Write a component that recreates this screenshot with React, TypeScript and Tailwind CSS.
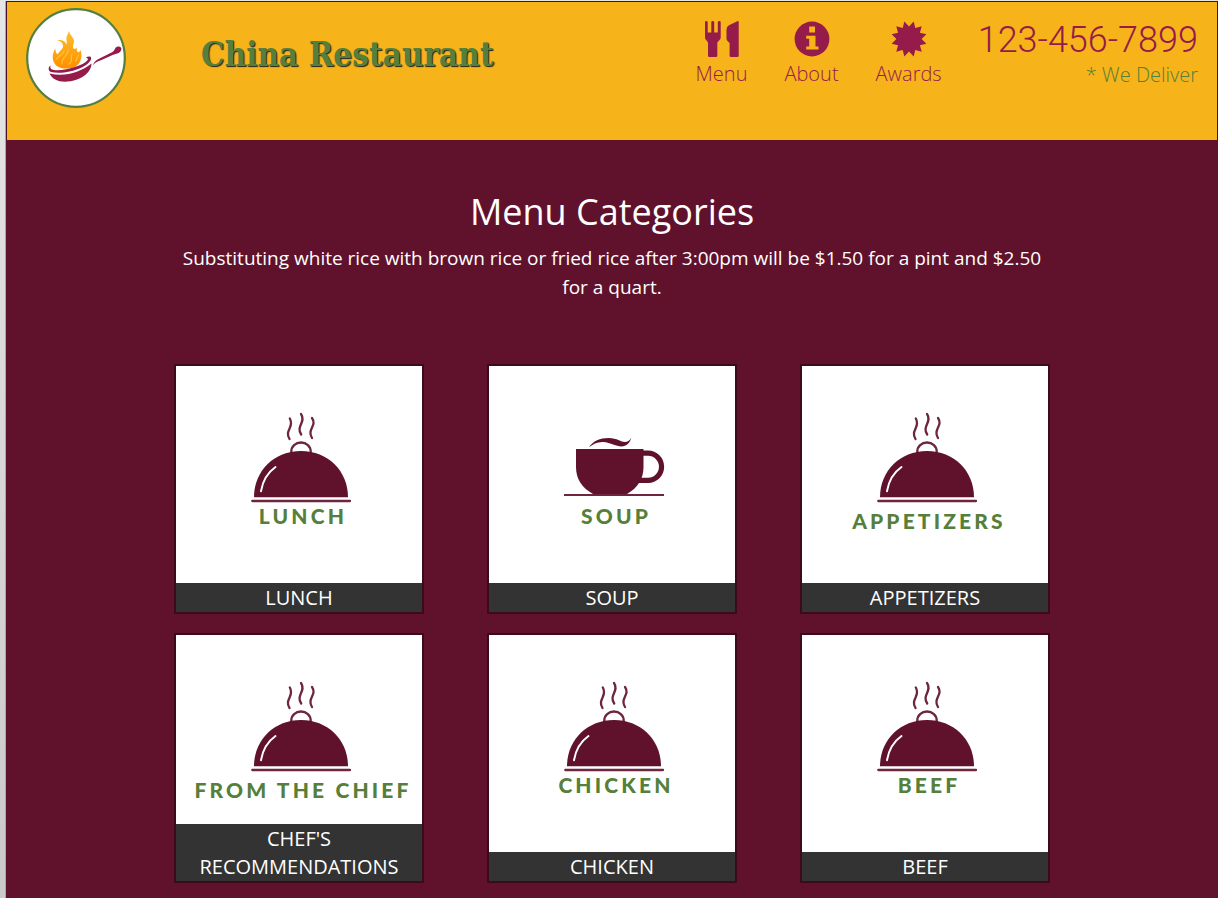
import React from "react";

function Logo() {
  return (
    <svg viewBox="0 0 100 100" className="size-[100px] shrink-0" role="img" aria-label="Flaming pan">
      <defs>
        <linearGradient id="flame" x1="0" y1="0" x2="0" y2="1">
          <stop offset="0" stopColor="#fbc02d" />
          <stop offset="1" stopColor="#ff8f00" />
        </linearGradient>
      </defs>
      <circle cx="50" cy="50" r="48.8" fill="#fff" stroke="#557f42" strokeWidth="2.2" />
      <path
        fill="url(#flame)"
        d="M42.5 22.7C44.5 27 47.5 29.500 48 33C48.300 35.500 46.500 37 47 39.500C47.500 41.500 50 41.500 50.500 39C51 41 50.500 42.500 51.500 44C53 44.500 54 43.500 54.500 42C56.500 47 55.500 53 51.500 57C48.500 60 44.500 60.700 40 60.500C34.500 60.500 30 58.500 28 54.500C25.800 50 26.800 44.500 29.300 40.500C29.500 44 30.300 46 32 46.300C33 42.500 37.500 41.500 37 37.500C36.500 34.500 34.500 33 31.200 32.300C35.500 31.300 39.500 33 40.300 36.500C41.500 34 40 31.500 40.500 29C41 26.500 43 25.500 42.500 22.700Z"
      />
      <path
        fill="none"
        stroke="#ffc22e"
        strokeWidth="1.2"
        strokeLinecap="round"
        d="M30.500 51C32 48 36.500 47.500 38 43M36 56C34.500 51 41.500 48 42.500 42M43 56C47 54 44.500 49 46 46M49.500 53C51.500 51 51 49 52.500 47"
      />
      <path
        fill="#951b4a"
        d="M24.500 57.500C22 59 22 63 25 64C35 66.500 51 63 60 57C64 54 66.500 50.500 64.500 48.700C63.500 48.200 61.500 48.500 59.800 49.400C62 50 62.500 51 61.300 52.500C57 57.500 39 63.300 28 62C25 61.500 23.800 60.500 24.500 57.500ZM23.500 65.500C39 69 54 64.500 65.500 55.500C65.500 64.500 54 73.700 39 73.700C31.500 73.700 26 70.700 23.500 65.500Z"
      />
      <path
        fill="#951b4a"
        d="M66.700 58C67.500 54.500 69.500 52.500 72.500 51L86.500 43.900C89 42.500 88.500 40 91 38.800C93.800 37.800 96 39.500 95.300 42C94.500 44.500 92 45.500 89.500 46C86.500 46.700 78.500 50.800 73.500 52.800C70 54.300 68.500 55 66.700 58Z"
      />
    </svg>
  );
}

function CutleryIcon() {
  return (
    <svg viewBox="0 0 34 36" className="h-9 w-[34px]" fill="currentColor" aria-hidden="true">
      <path d="M0 1.300Q0 0 1.300 0T2.700 1.300V11.500H6.300V1.300Q6.300 0 7.700 0T9.200 1.300V11.500H12.800V1.300Q12.800 0 14.200 0T15.700 1.300V16.500Q15.700 18 14.500 19L12.300 21.500V34.700Q12.300 36 11 36H4.300Q3 36 3 34.700V21.500L1.200 19Q0 18 0 16.500Z" />
      <path d="M21.500 8.500Q21.500 5.500 24 4.200L32.300 .2Q33.700 -.2 33.700 1V34.700Q33.700 36 32.400 36H26Q24.600 36 24.600 34.700V22L22.300 19.800Q21.500 19 21.500 17.500Z" />
    </svg>
  );
}

function InfoIcon() {
  return (
    <svg viewBox="0 0 36 36" className="size-9" aria-hidden="true">
      <circle cx="18" cy="18" r="17.400" fill="currentColor" />
      <path
        fill="#f6b31a"
        d="M15.200 5.500H21V11.500H15.200ZM12.200 14.700H21.500V25.500H24.500V28.500H12.200V25.500H15.200V17.700H12.200Z"
      />
    </svg>
  );
}

function BurstIcon() {
  const points = Array.from({ length: 24 }, (_, i) => {
    const radius = i % 2 === 0 ? 18 : 12.6;
    const angle = ((i * 15 - 75) * Math.PI) / 180;
    return `${(18 + radius * Math.cos(angle)).toFixed(2)},${(18 + radius * Math.sin(angle)).toFixed(2)}`;
  }).join(" ");
  return (
    <svg viewBox="0 0 36 36" className="size-9" fill="currentColor" aria-hidden="true">
      <polygon points={points} />
    </svg>
  );
}

function DomeArt() {
  return (
    <svg viewBox="0 0 250 138" className="h-[138px] w-[250px] shrink-0" aria-hidden="true">
      <g fill="none" stroke="#6d2540" strokeWidth="2.300" strokeLinecap="round">
        <path d="M113.800 52.500C119 61 108 64 113.500 73M125 48C130.500 56 119.500 60 125.200 68.500M136 52C141.500 60 130.500 63 136 72" />
        <path d="M115.300 87V85.500A9.700 9 0 0 1 134.700 85.500V87" />
        <path d="M76.300 135H174" />
      </g>
      <path fill="#60122d" d="M78 131.300C78 105 98 85 125 85S172 105 172 131.300Z" />
      <path fill="none" stroke="#fff" strokeWidth="2" strokeLinecap="round" d="M99.500 101C91 107 86.500 116 85 125.200" />
    </svg>
  );
}

function CupArt() {
  return (
    <svg viewBox="0 0 250 138" className="h-[138px] w-[250px] shrink-0" aria-hidden="true">
      <path
        fill="#60122d"
        d="M87 83H154.500V101C154.500 113 148.500 122 138 128H104C93 122 87 113 87 101Z"
      />
      <path
        fill="#60122d"
        d="M100 81.300C104 75 111 72 119.500 72C129 72 132 76.500 136.500 76C139.500 75.500 141 74 142.300 71.500C141 77 137.500 80.500 132.500 80.500C127 80.500 122 76.500 114 76C108 75.800 104 78 100 81.300Z"
      />
      <path fill="none" stroke="#60122d" strokeWidth="5.200" d="M153 87.200H159A13.500 13.500 0 0 1 159 114.300H148" />
      <path stroke="#6d2540" strokeWidth="2.200" d="M75 129H175" />
    </svg>
  );
}

type Category = { name: string; label: string; art: "dome" | "cup"; low?: boolean };

const categories: Category[] = [
  { name: "LUNCH", label: "LUNCH", art: "dome" },
  { name: "SOUP", label: "SOUP", art: "cup" },
  { name: "APPETIZERS", label: "APPETIZERS", art: "dome", low: true },
  { name: "CHEF'S RECOMMENDATIONS", label: "FROM THE CHIEF", art: "dome", low: true },
  { name: "CHICKEN", label: "CHICKEN", art: "dome" },
  { name: "BEEF", label: "BEEF", art: "dome" },
];

function CategoryCard({ category }: { category: Category }) {
  return (
    <a
      href="#"
      className="relative flex h-[250px] flex-col overflow-hidden border-2 border-[#3d0a1d] bg-white"
    >
      <span className="flex w-[250px] flex-col items-center">
        {category.art === "dome" ? <DomeArt /> : <CupArt />}
        <span
          className={`pl-1 font-[Lato,sans-serif] text-[21px] leading-6 font-black tracking-[0.15em] whitespace-nowrap text-[#557f3b] ${
            category.low ? "pt-[5px]" : ""
          }`}
        >
          {category.label}
        </span>
      </span>
      <span className="absolute inset-x-0 bottom-0 bg-[#333333] px-2 pt-px text-center text-[20px] leading-7 text-white">
        {category.name}
      </span>
    </a>
  );
}

const links = [
  { text: "Menu", Icon: CutleryIcon },
  { text: "About", Icon: InfoIcon },
  { text: "Awards", Icon: BurstIcon },
];

export default function App() {
  return (
    <div className="flex min-h-screen bg-linear-to-b from-[#e6e6e6] to-[#cacaca] pt-px font-['Open_Sans','Noto_Sans',sans-serif]">
      <div className="w-1.5 shrink-0 border-r border-[#a9a9a9]" />
      <div className="min-w-0 grow bg-[#60122d]">
        <header className="flex min-h-[139px] flex-wrap items-start border-x border-t border-[#46102a] bg-[#f6b31a] pt-1.5 pr-[19px] pl-[19px] text-[#951b4a]">
          <Logo />
          <h1 className="pt-5 pl-[75px] font-['DejaVu_Serif_Condensed','Liberation_Serif',serif] text-[33px] leading-[54px] font-bold text-[#557f3b] [text-shadow:1px_1px_1px_#222]">
            China Restaurant
          </h1>
          <nav className="ml-auto flex gap-[37px] pt-[13px]">
            {links.map(({ text, Icon }) => (
              <a key={text} href="#" className="flex flex-col items-center text-[20px] leading-[29px] font-light">
                <Icon />
                <span className="pt-0.5">{text}</span>
              </a>
            ))}
          </nav>
          <div className="pt-3 pl-9 text-right font-light">
            <a href="tel:123-456-7899" className="block font-[Roboto,sans-serif] text-[36px] leading-10">
              123-456-7899
            </a>
            <p className="text-[20px] leading-[29px] text-[#557f3b]">* We Deliver</p>
          </div>
        </header>
        <main className="mx-auto max-w-[876px] pt-[50px] pb-4">
          <h2 className="text-center text-[36px] leading-11 text-white">Menu Categories</h2>
          <p className="pt-[10px] text-center text-[19px] leading-[29px] text-white">
            Substituting white rice with brown rice or fried rice after 3:00pm will be $1.50 for a pint and $2.50 for a
            quart.
          </p>
          <div className="grid grid-cols-[repeat(auto-fill,250px)] justify-between gap-x-4 gap-y-[19px] pt-[62px]">
            {categories.map((category) => (
              <CategoryCard key={category.name} category={category} />
            ))}
          </div>
        </main>
      </div>
    </div>
  );
}
